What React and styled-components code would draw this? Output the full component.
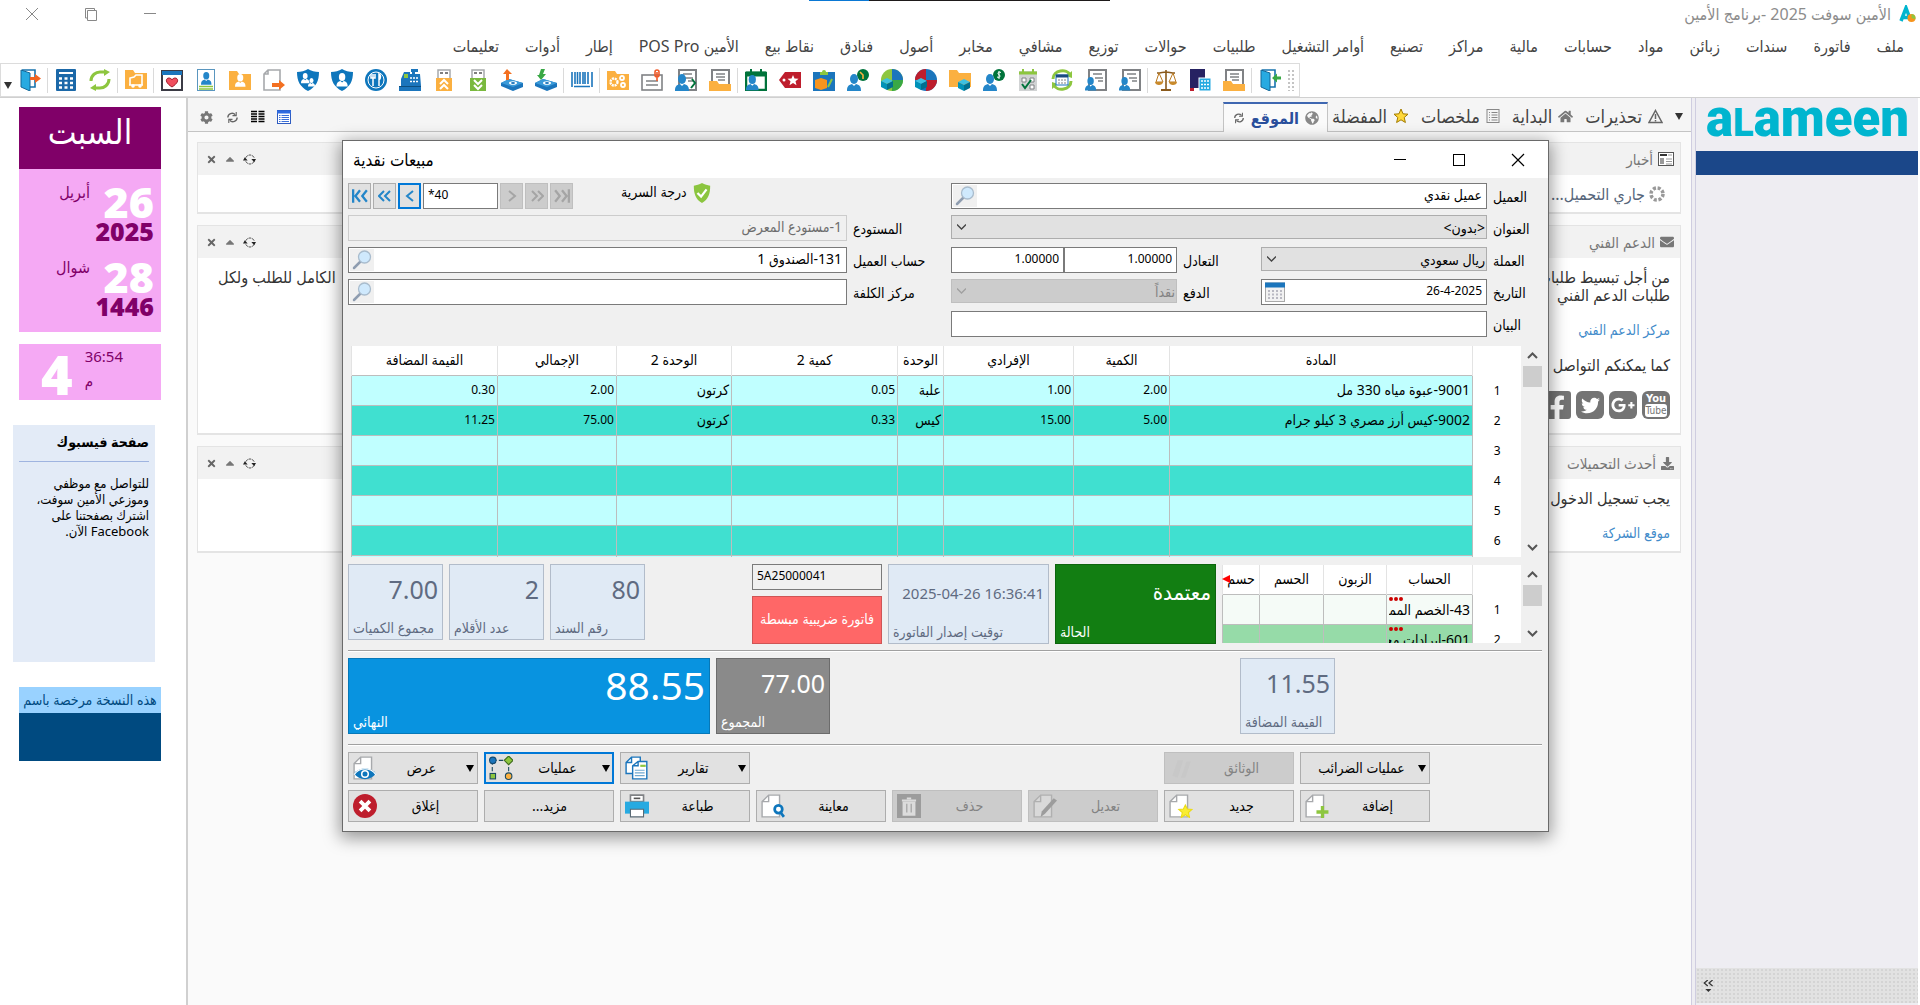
import React from 'react';
import styled, { createGlobalStyle, css } from 'styled-components';
import {
  FaCog, FaHome, FaEnvelope, FaDownload, FaGooglePlusG, FaTwitter, FaFacebookSquare, FaGlobeAmericas, FaTimes, FaCaretUp,
} from 'react-icons/fa';

const uiFont = '"Noto Sans", "DejaVu Sans Condensed", "DejaVu Sans", sans-serif';

const GlobalStyle = createGlobalStyle`
  * {
    box-sizing: border-box;
  }
  body {
    margin: 0;
    background: #fff;
    color: #000;
    font-family: ${uiFont};
    font-size: 14px;
    overflow: hidden;
  }
  button, input, select {
    font-family: inherit;
    font-size: inherit;
    color: inherit;
    margin: 0;
  }
  a {
    text-decoration: none;
  }
  svg {
    display: block;
    flex: none;
  }
`;

/* ---------- drawing pieces ---------- */

const Svg = ({ size = 22, box = 22, children }) => (
  <svg width={size} height={size} viewBox={`0 0 ${box} ${box}`} fill="none" aria-hidden="true">
    {children}
  </svg>
);

const Person = ({ x = 0, y = 0, s = 1, color = '#2486c9' }) => (
  <g transform={`translate(${x} ${y}) scale(${s})`} fill={color}>
    <ellipse cx="7" cy="5" rx="4" ry="5" />
    <path d="M0 17c0-4 1-6 5-7l2 2 2-2c4 1 5 3 5 7z" />
  </g>
);

const Folder = ({ x = 0, y = 0, w = 22, h = 19 }) => (
  <path fill="#fbb040" d={`M${x} ${y}h8l2 3h${w - 10}v${h - 3}h-${w}z`} />
);

const Sheet = () => (
  <>
    <rect x="4" y="1" width="17" height="20" fill="#fff" stroke="#808285" strokeWidth="2" />
    <path d="M8 5h9M10 9h8M13 12h5" stroke="#808285" strokeWidth="1.6" />
  </>
);

const Cube = ({ x = 0, y = 0 }) => (
  <g transform={`translate(${x} ${y})`}>
    <path d="M6 0l6 3-6 3-6-3z" fill="#3ec1e0" />
    <path d="M0 3l6 3v6l-6-3z" fill="#0092b8" />
    <path d="M12 3l-6 3v6l6-3z" fill="#00708f" />
  </g>
);

const Door = ({ arrow, back }) => (
  <>
    <path d="M3 1h13v17h-5" stroke="#1773ad" strokeWidth="1.6" />
    <path d="M2 1l9 3v18l-9-4z" fill="#27aae1" stroke="#126798" strokeWidth="1" />
    {back
      ? <path d="M22 7.500v3h-4v3l-5-4.500 5-4.500v3z" fill="#39a845" />
      : <path d="M11 8v3h5v3l6-4.500-6-4.500v3z" fill={arrow} />}
  </>
);

const Disk = () => (
  <>
    <path d="M0 14l8-4 14 4v4l-10 4-12-5z" fill="#1b75bc" />
    <path d="M0 14l8-4 14 4-10 4z" fill="#3a9ad9" />
    <ellipse cx="12" cy="14" rx="4" ry="1.800" fill="#fff" />
    <ellipse cx="12" cy="14" rx="2" ry=".9" fill="#1b75bc" />
  </>
);

const DocFolder = () => (
  <>
    <rect x="3" y="1" width="17" height="17" fill="#fff" stroke="#808285" strokeWidth="2" />
    <path d="M7 5h9M7 8h9M9 11h7" stroke="#808285" strokeWidth="1.500" />
    <path d="M0 12h8l2 3h12v7H0z" fill="#fbb040" />
  </>
);

const ShieldShape = () => <path d="M11 0c3 2 7 3 11 3 0 9-3 15-11 19C3 18 0 12 0 3c4 0 8-1 11-3z" fill="#0e76bc" />;

const UsbStick = ({ color, children }) => (
  <>
    <path d="M5 9V1h12v8" stroke="#a7a9ac" strokeWidth="1.500" fill="#fff" />
    <path d="M7 4h3M12 4h3" stroke="#555" strokeWidth="1.500" />
    <rect x="3" y="9" width="16" height="13" fill={color} />
    <g stroke="#fff" strokeWidth="2">{children}</g>
  </>
);

const BlankDoc = () => (
  <path d="M7 1h10v20H1V7z M7 1v6H1" fill="#fff" stroke="#a7a9ac" strokeWidth="1.300" />
);

const toolGroups = [
  [{ name: 'خروج', art: <Door arrow="#f26522" /> }],
  [
    {
      name: 'آلة حاسبة',
      art: (
        <>
          <rect x="1" width="20" height="22" rx="1" fill="#1b68a8" />
          <path d="M4 4h14" stroke="#fff" strokeWidth="2" />
          <path d="M4 9.500h14M4 14h14M4 18.500h14" stroke="#fff" strokeWidth="2.600" strokeDasharray="3 2.500" />
        </>
      ),
    },
    {
      name: 'تحديث',
      art: (
        <>
          <path d="M2 12c0-6 5-9 9-9h6M20 10c0 6-5 9-9 9H5" stroke="#8dc63f" strokeWidth="3" />
          <path d="M15 0l6 3-6 4zM7 15l-6 4 6 3z" fill="#8dc63f" />
        </>
      ),
    },
  ],
  [{
    name: 'توزيع',
    art: (
      <>
        <Folder y={1} />
        <path d="M5 16V9l4-1 2-2h6v10M4 16h14" stroke="#fff" strokeWidth="1.600" />
        <circle cx="8" cy="17" r="1.800" fill="#fff" />
        <circle cx="15" cy="17" r="1.800" fill="#fff" />
      </>
    ),
  }],
  [
    {
      name: 'مشافي',
      art: (
        <>
          <rect x="1" y="2" width="20" height="19" fill="#fff" stroke="#3b3b45" strokeWidth="2" />
          <path d="M1 4h20" stroke="#1b75bc" strokeWidth="4" />
          <path d="M11 18c-8-5-6-9-3-9 1 0 3 1 3 2 0-1 2-2 3-2 3 0 5 4-3 9z" fill="#f04e5e" stroke="#a01c2c" />
        </>
      ),
    },
    {
      name: 'طبيب',
      art: (
        <>
          <rect x="2.500" y=".5" width="17" height="21" fill="#fff" stroke="#5a96bf" />
          <Person x={6} y={3} s={0.75} />
          <path d="M4 17.500h14M4 20h14" stroke="#8dc63f" strokeWidth="1.500" />
        </>
      ),
    },
    { name: 'زبائن', art: <><Folder y={2} /><Person x={6} y={5} s={0.75} color="#fff" /></> },
    {
      name: 'تصدير',
      art: (
        <>
          <path d="M5 1h12v20H1V5zM5 1v4H1" fill="#fff" stroke="#a7a9ac" strokeWidth="1.600" />
          <path d="M9 14h7v-3l6 5-6 5v-3H9z" fill="#f37021" />
        </>
      ),
    },
    { name: 'مجموعات', art: <><ShieldShape /><Person x={4} y={4} s={0.6} color="#fff" /><Person x={11} y={9} s={0.5} color="#fff" /></> },
    { name: 'مستخدمون', art: <><ShieldShape /><Person x={5.5} y={4} s={0.8} color="#fff" /></> },
    {
      name: 'مطاعم',
      art: (
        <>
          <circle cx="11" cy="11" r="11" fill="#0e76bc" />
          <circle cx="11" cy="11" r="8" stroke="#fff" />
          <path d="M8 5v12M6 5v4h4V5M14 17V5c2 1 2 4 0 6" stroke="#fff" strokeWidth="1.500" />
        </>
      ),
    },
    {
      name: 'نقطة بيع',
      art: (
        <>
          <path d="M2 10L5 3h6v2h2V3h-1V0h7v3h-3v2h5l1 12v5H0v-5h2z" fill="#1b75bc" />
          <path d="M5 5h4v4H5z" fill="#8dc63f" />
          <path d="M11 9h8M11 12.500h8" stroke="#fff" strokeWidth="1.500" strokeDasharray="2 1" />
          <path d="M0 17.500h22" stroke="#0d4f80" />
        </>
      ),
    },
    { name: 'رفع', art: <UsbStick color="#fbb040"><path d="M7 15l4-4 4 4M7 20l4-4 4 4" /></UsbStick> },
    { name: 'تنزيل', art: <UsbStick color="#7ab93e"><path d="M7 11l4 4 4-4M7 16l4 4 4-4" /></UsbStick> },
    { name: 'نسخ احتياطي', art: <><Disk /><path d="M6 0l5 5H8v6H5V5H2z" fill="#f37021" /></> },
    { name: 'استرجاع', art: <><Disk /><path d="M6 0h4L8 5h3l-5 6-4-5h2z" fill="#39a845" /></> },
  ],
  [{
    name: 'باركود',
    art: <path d="M1 3v15M4 3v12M6.500 3v12M9 3v12M12 3v12M14 3v12M17 3v12M21 3v15M3 17.500h16" stroke="#1b75bc" strokeWidth="1.600" />,
  }],
  [
    {
      name: 'إعدادات',
      art: (
        <>
          <Folder y={2} />
          <circle cx="7" cy="13" r="3.500" stroke="#fff" strokeWidth="2.400" strokeDasharray="2 .8" />
          <circle cx="15" cy="9" r="2" stroke="#fff" strokeWidth="1.800" />
          <circle cx="16" cy="16" r="2" stroke="#fff" strokeWidth="1.800" />
        </>
      ),
    },
    {
      name: 'ملاحظة',
      art: (
        <>
          <rect x="1" y="6" width="20" height="15" fill="#fff" stroke="#808285" strokeWidth="1.600" />
          <path d="M5 12h12M5 16h12" stroke="#808285" strokeWidth="1.500" />
          <path d="M16 12V3M14 6V3a2 2 0 014 0v3a2 2 0 01-4 0" stroke="#f15a29" strokeWidth="1.600" />
        </>
      ),
    },
    { name: 'حركة زبون', art: <><Sheet /><Person x={0} y={5} /><path d="M17 10l3 4-4 5" stroke="#00733b" strokeWidth="2" /></> },
    { name: 'كشف', art: <DocFolder /> },
  ],
  [
    {
      name: 'مواعيد',
      art: (
        <>
          <rect x="1" y="4" width="20" height="17" fill="#fff" stroke="#00733b" strokeWidth="2.500" />
          <path d="M1 5h20" stroke="#00733b" strokeWidth="5" />
          <path d="M6 0v4M16 0v4" stroke="#00733b" strokeWidth="2" />
          <Person x={1} y={6} s={0.9} />
        </>
      ),
    },
    {
      name: 'عروض',
      art: (
        <>
          <path d="M6 3h16v16H6l-6-8z" fill="#be1e2d" />
          <path d="M14 6l1.500 3.500 4 .3-3 2.500 1 4-3.500-2.200-3.500 2.200 1-4-3-2.500 4-.3z" fill="#fff" />
          <circle cx="5" cy="11" r="1.500" fill="#fff" />
        </>
      ),
    },
    {
      name: 'جرد',
      art: (
        <>
          <rect y="3" width="22" height="19" fill="#1b75bc" />
          <path d="M7 3h2a2 2 0 014 0h2v3H7z" fill="#8dc63f" />
          <path d="M2 11l6-2 6 2v8l-6 2-6-2z" fill="#f7941d" />
          <path d="M15 18l4-8" stroke="#8dc63f" strokeWidth="2" />
        </>
      ),
    },
    { name: 'استحقاق', art: <><circle cx="16" cy="6" r="6" fill="#00733b" /><path d="M13 3l3 3v4" stroke="#fbb040" strokeWidth="1.600" /><Person x={0} y={5} /></> },
    { name: 'أرباح المواد', art: <><circle cx="11" cy="11" r="11" fill="#8dc63f" /><path d="M11 0a11 11 0 0111 11H11z" fill="#1b75bc" /><path d="M11 22a11 11 0 0011-11H11z" fill="#39a845" /><Cube y={9} /></> },
    { name: 'مبيعات المواد', art: <><circle cx="11" cy="11" r="11" fill="#1b75bc" /><path d="M11 0a11 11 0 00-11 11h11z" fill="#be1e2d" /><path d="M11 22a11 11 0 0011-11H11z" fill="#be1e2d" /><Cube y={9} /></> },
    { name: 'مواد', art: <><Folder y={1} h={17} /><Cube x={9} y={10} /></> },
    { name: 'دفعات', art: <><circle cx="16" cy="6" r="6" fill="#00733b" /><path d="M18 3.500c-3-1.500-4 1.500-2 2.200s1 3.800-2 2.300M16 2v8" stroke="#fff" /><Person x={0} y={5} /></> },
    {
      name: 'مهام',
      art: (
        <>
          <rect x="2" y="2" width="18" height="20" fill="#d1d3d4" />
          <path d="M2 4h18" stroke="#8dc63f" strokeWidth="3" />
          <path d="M6 0v4M16 0v4" stroke="#8dc63f" strokeWidth="2" />
          <path d="M5 9h4v4H5zM13 9h4v4h-4zM13 16h4v4h-4z" fill="#fff" stroke="#808285" />
          <path d="M5 15l3 4 6-8" stroke="#00733b" strokeWidth="2" />
        </>
      ),
    },
    {
      name: 'تدوير',
      art: (
        <>
          <path d="M2 10c0-9 14-11 17-4M20 12c0 9-14 11-17 4" stroke="#8dc63f" strokeWidth="3" />
          <path d="M21 2v7l-6-2zM1 20v-7l6 2z" fill="#8dc63f" />
          <rect x="5" y="6" width="12" height="10" fill="#fff" stroke="#1b75bc" />
          <path d="M5 7h12" stroke="#1b4a80" strokeWidth="3" />
          <path d="M7 11h8M7 14h8" stroke="#808285" strokeDasharray="2 1" />
        </>
      ),
    },
    { name: 'بطاقة زبون', art: <><Sheet /><Person x={0} y={8} s={0.8} /></> },
    { name: 'كشف زبون', art: <><Sheet /><Person x={0} y={8} s={0.8} /></> },
  ],
  [
    {
      name: 'ميزان',
      art: (
        <>
          <path d="M11 1v19M2 4c4 0 6-1 9-1s5 1 9 1" stroke="#8a5a1c" strokeWidth="1.600" />
          <path d="M4 4L1 13h7zM18 4l-4 9h7z" stroke="#b9781f" />
          <path d="M0 13h8c0 4-8 4-8 0zM14 13h8c0 4-8 4-8 0z" fill="#c98a2b" />
          <path d="M6 20h10v2H6z" fill="#8a5a1c" />
        </>
      ),
    },
    {
      name: 'دفتر',
      art: (
        <>
          <rect x="1" width="15" height="19" fill="#262262" />
          <path d="M1 19h4v3H1z" fill="#be1e2d" />
          <rect x="10" y="9" width="12" height="13" fill="#27aae1" stroke="#fff" />
          <path d="M12 12h8M12 15.500h8M12 19h8" stroke="#fff" strokeWidth="1.600" strokeDasharray="2 1" />
        </>
      ),
    },
    { name: 'دفتر اليومية', art: <DocFolder /> },
  ],
  [{ name: 'دخول', art: <Door back /> }],
];

/* ---------- main frame ---------- */

const Screen = styled.div`
  height: 100vh;
  display: flex;
  flex-direction: column;
`;

const TopStrip = styled.div`
  position: absolute;
  top: 0;
  left: 809px;
  width: 301px;
  height: 1px;
  background: #1e1a1a;
  border-left: 60px solid #0a78d4;
`;

const TitleBar = styled.header`
  height: 28px;
  flex: none;
  display: flex;
  justify-content: space-between;
  align-items: center;
  padding: 0 4px 0 24px;
`;

const WindowControls = styled.div`
  display: flex;
  gap: ${(p) => p.$gap}px;
  align-items: center;
`;

const PlainButton = styled.button`
  display: flex;
  align-items: center;
  justify-content: center;
  width: ${(p) => p.$w || 16}px;
  height: ${(p) => p.$h || 16}px;
  padding: 0;
  border: 0;
  background: none;
`;

const AppTitle = styled.h1`
  margin: 0;
  display: flex;
  align-items: center;
  gap: 8px;
  font-size: 16px;
  font-weight: 400;
  color: #8c8c8c;
`;

const Menu = styled.nav`
  height: 35px;
  flex: none;
  display: flex;
  align-items: center;
  gap: 26px;
  padding: 0 16px;
  font-size: 16px;
  white-space: nowrap;
`;

const MenuLink = styled.a`
  color: #444;
`;

const ToolRow = styled.div`
  height: 35px;
  flex: none;
  display: flex;
  align-items: stretch;
  border-bottom: 1px solid #d0d0d0;
`;

const Toolbar = styled.div`
  display: flex;
  align-items: center;
  border: 1px solid #dcdcdc;
`;

const MoreTools = styled.button`
  align-self: stretch;
  width: 12px;
  padding: 0 0 7px 3px;
  display: flex;
  align-items: flex-end;
  border: 0;
  background: none;
`;

const ToolDivider = styled.span`
  width: 2px;
  height: 25px;
  border-left: 1px solid #dadada;
`;

const Grip = styled.span`
  width: 9px;
  height: 22px;
  margin: 0 3px 0 0;
  background-image: radial-gradient(circle, #c4c4c4 1px, transparent 1px);
  background-size: 4px 4px;
`;

const Workspace = styled.div`
  flex: 1;
  min-height: 0;
  display: flex;
`;

/* ---------- left side ---------- */

const DateSide = styled.aside`
  width: 188px;
  flex: none;
  padding: 9px 0 0 19px;
  border-right: 2px solid #d0d0d0;
`;

const DayName = styled.div`
  width: 142px;
  height: 62px;
  background: #800068;
  color: #fff;
  font-size: 34px;
  line-height: 48px;
  text-align: center;
`;

const DateCard = styled.div`
  width: 142px;
  height: 163px;
  padding: 14px 7px 0;
  background: #f5a9f4;
  color: #800068;
`;

const DateBlock = styled.div`
  display: grid;
  grid-template-columns: 50px 1fr;
  grid-template-rows: 38px 20px;
  column-gap: 14px;
  height: 75px;
  font-size: 16px;
  line-height: 18px;
`;

const BigNumber = styled.strong`
  font-family: "Open Sans", "Noto Sans", sans-serif;
  font-size: ${(p) => p.$size}px;
  line-height: ${(p) => p.$line}px;
  font-weight: 800;
  color: #fff;
`;

const YearNumber = styled.strong`
  grid-column: 1 / 3;
  font-family: "Open Sans", "Noto Sans", sans-serif;
  font-size: 25px;
  line-height: 20px;
  font-weight: 800;
`;

const TimeCard = styled.div`
  width: 142px;
  height: 56px;
  margin-top: 12px;
  padding: 0 20px 0 22px;
  display: flex;
  gap: 12px;
  background: #f5a9f4;
  color: #800068;
  font-size: 15px;
  line-height: 24px;
`;

const PageCard = styled.section`
  width: 142px;
  height: 237px;
  margin: 25px 0 25px -6px;
  padding: 8px 6px;
  background: #e3ebf7;
  font-size: 13px;
  line-height: 16px;
`;

const PageTitle = styled.h2`
  margin: 0 0 13px;
  padding-bottom: 10px;
  border-bottom: 1px solid #9fb4e0;
  font-size: 14px;
  line-height: 18px;
`;

const LicenseLabel = styled.div`
  width: 142px;
  height: 26px;
  background: #99d2ff;
  color: #004a80;
  font-size: 14px;
  line-height: 26px;
  text-align: center;
  white-space: nowrap;
`;

const LicenseName = styled.div`
  width: 142px;
  height: 48px;
  background: #004a80;
`;

/* ---------- home page ---------- */

const Home = styled.main`
  flex: 1;
  min-width: 0;
  background: #fafafa;
`;

const TabBar = styled.div`
  height: 34px;
  display: flex;
  align-items: flex-end;
  justify-content: space-between;
  background: #f5f5f5;
  border-bottom: 1px solid #c4c4c4;
`;

const Tabs = styled.div`
  display: flex;
  align-items: center;
  gap: 12px;
  padding-right: 8px;
`;

const Tab = styled.button`
  display: flex;
  align-items: center;
  gap: 6px;
  height: 30px;
  padding: 0;
  border: 0;
  background: none;
  color: #444;
  font-size: 18px;
  white-space: nowrap;
  ${(p) => p.$active && css`
    margin: 0 -8px -1px 0;
    padding: 0 8px 0 9px;
    border: 1px solid #c4c4c4;
    border-top: 2px solid #3f67b1;
    border-bottom: 0;
    background: #fafafa;
    color: #2a4f9c;
    font-size: 16px;
    font-weight: 600;
  `}
`;

const PageTools = styled.div`
  display: flex;
  align-items: center;
  gap: 10px;
  height: 28px;
  padding-left: 10px;
`;

const Panels = styled.div`
  display: flex;
  flex-direction: column;
  gap: 11px;
  padding: 10px 10px 0 9px;
`;

const Panel = styled.section`
  height: ${(p) => p.$h}px;
  border: 1px solid #e4e4e4;
  border-bottom-width: 2px;
  background: #fff;
`;

const PanelHead = styled.div`
  display: flex;
  justify-content: space-between;
  align-items: center;
  height: 32px;
  padding: 0 6px 0 5px;
  background: #f2f2f2;
  color: #777;
`;

const PanelTitle = styled.h2`
  margin: 0;
  display: flex;
  align-items: center;
  gap: 5px;
  font-size: 15px;
  line-height: 28px;
  font-weight: 400;
`;

const PanelBody = styled.div`
  padding: ${(p) => p.$top}px 10px 0 20px;
  color: #333;
  font-size: 16px;
  line-height: 18px;
`;

const Loading = styled.p`
  margin: 0;
  padding: 0 5px;
  display: flex;
  align-items: center;
  gap: 4px;
  color: #56657a;
`;

const Line = styled.p`
  margin: 0;
  display: flex;
  justify-content: space-between;
  white-space: nowrap;
`;

const PanelLink = styled.a`
  display: block;
  margin: 17px 0;
  color: #428bca;
  font-size: 14px;
`;

const Socials = styled.div`
  display: flex;
  gap: 5px;
  margin-top: 17px;
`;

const SocialLink = styled.a`
  width: 28px;
  height: 28px;
  display: flex;
  align-items: center;
  justify-content: center;
  border-radius: 6px;
  background: ${(p) => (p.$bare ? 'none' : '#747474')};
  color: ${(p) => (p.$bare ? '#747474' : '#fff')};
`;

/* ---------- brand side ---------- */

const BrandSide = styled.aside`
  width: 229px;
  flex: none;
  display: flex;
  flex-direction: column;
  background: #eeedf2;
  border-left: 1px solid #cfcde0;
  border-right: 2px solid #fff;
`;

const BrandInner = styled.div`
  flex: 1;
  margin-left: 3px;
  border-left: 1px solid #cfcde0;
  display: flex;
  flex-direction: column;
`;

const Logo = styled.div`
  height: 53px;
  padding-left: 10px;
  color: #00b5cf;
  font-family: Roboto, sans-serif;
  font-weight: 900;
  font-size: 51px;
  line-height: 42px;
`;

const LogoCap = styled.span`
  font-size: 38px;
`;

const BlueBar = styled.div`
  height: 24px;
  background: #1b4789;
`;

const BrandFoot = styled.div`
  height: 35px;
  margin-top: auto;
  margin-bottom: 2px;
  padding: 12px 7px;
  background-color: #e2e2e2;
  background-image: radial-gradient(circle, #d4d4d4 1px, transparent 1px);
  background-size: 4px 4px;
`;

/* ---------- invoice window ---------- */

const Dialog = styled.section`
  position: absolute;
  top: 140px;
  left: 342px;
  width: 1207px;
  border: 1px solid #6a6a6a;
  background: #f0f0f0;
  box-shadow: 0 4px 16px 2px rgba(0, 0, 0, 0.4);
`;

const DialogHead = styled.header`
  height: 37px;
  display: flex;
  justify-content: space-between;
  align-items: center;
  padding: 0 22px 0 10px;
  background: #fff;
`;

const DialogTitle = styled.h2`
  margin: 0;
  font-size: 17px;
  font-weight: 400;
`;

const DialogBody = styled.div`
  padding: 5px 6px 9px 5px;
`;

const FormGrid = styled.div`
  display: grid;
  grid-template-columns: minmax(0, 499fr) 92px minmax(0, 536fr) 49px;
  grid-auto-rows: 26px;
  gap: 6px;
`;

const Label = styled.label`
  padding-top: 4px;
  line-height: 20px;
  white-space: nowrap;
`;

const NavRow = styled.div`
  display: flex;
  gap: 2px;
`;

const NavButton = styled.button`
  width: 23px;
  height: 26px;
  padding: 0;
  display: flex;
  align-items: center;
  justify-content: center;
  border: 1px solid #adadad;
  background: #e1e1e1;
  color: #2486c9;
  ${(p) => p.$focus && css`border: 2px solid #0078d7;`}
  &:disabled {
    border-color: #bfbfbf;
    background: #ccc;
    color: #a5a5a5;
  }
`;

const Secrecy = styled.span`
  display: flex;
  gap: 5px;
  margin-left: 46px;
  line-height: 18px;
`;

const FieldBox = styled.div`
  position: relative;
  min-width: 0;
`;

const TextInput = styled.input`
  width: ${(p) => (p.$w ? `${p.$w}px` : '100%')};
  height: 26px;
  padding: 0 4px 3px;
  border: 1px solid #7a7a7a;
  border-radius: 0;
  background: ${(p) => p.$fill || '#fff'};
  font-size: ${(p) => (p.$num ? 12 : 14)}px;
  outline: 0;
  &:disabled {
    border-color: #ccc;
    background: #f0f0f0;
    color: #6d6d6d;
  }
`;

const FieldIcon = styled.button`
  position: absolute;
  top: 2px;
  left: 2px;
  width: 24px;
  height: 22px;
  padding: 0;
  display: flex;
  align-items: center;
  justify-content: center;
  border: 0;
  background: ${(p) => (p.$plain ? 'none' : '#f0f0f0')};
`;

const SelectInput = styled.select`
  width: 100%;
  height: 24px;
  padding: 0 1px;
  border: 1px solid #adadad;
  border-radius: 0;
  background: #e1e1e1;
  appearance: none;
  &:disabled {
    border-color: #bfbfbf;
    background: #ccc;
    color: #838383;
    opacity: 1;
  }
`;

const Chevron = styled.span`
  position: absolute;
  top: 9px;
  left: 6px;
  color: ${(p) => (p.$off ? '#a0a0a0' : '#444')};
  pointer-events: none;
`;

const SplitField = styled.div`
  display: grid;
  grid-template-columns: minmax(0, 1fr) 72px minmax(0, 1fr);
  gap: 6px;
`;

const Pair = styled.div`
  display: grid;
  grid-template-columns: 1fr 1fr;
`;

const GridArea = styled.div`
  display: flex;
  gap: 2px;
  margin: 9px 0 7px 3px;
  height: 211px;
`;

const GridClip = styled.div`
  position: relative;
  flex: ${(p) => (p.$w ? `0 0 ${p.$w}px` : 1)};
  min-width: 0;
  overflow: hidden;
  background: #fff;
`;

const Table = styled.table`
  width: 100%;
  table-layout: fixed;
  border-collapse: collapse;
`;

const HeadCell = styled.th`
  height: 29px;
  padding: 0 2px;
  border-left: 1px solid #e3e3e3;
  background: #fff;
  font-weight: 400;
  line-height: 20px;
  overflow: hidden;
  white-space: nowrap;
`;

const Cell = styled.td`
  height: 30px;
  padding: 0 2px;
  border: 1px solid #bdbdbd;
  background: ${(p) => p.$fill};
  font-size: ${(p) => (p.$num ? 12 : 14)}px;
  line-height: 20px;
  text-align: right;
  overflow: hidden;
  white-space: nowrap;
`;

const CellAnchor = styled.div`
  position: relative;
  height: 29px;
  padding-top: 5px;
  overflow: hidden;
`;

const CellDots = styled.span`
  position: absolute;
  top: 2px;
  left: 0;
`;

const MoreColumns = styled.span`
  position: absolute;
  top: 10px;
  left: 0;
`;

const NumberCell = styled.th`
  border: 0;
  background: #fff;
  font-size: 12px;
  font-weight: 400;
  text-align: center;
`;

const ScrollBar = styled.div`
  width: 19px;
  flex: none;
  display: flex;
  flex-direction: column;
  align-items: center;
  padding-top: 6px;
`;

const ScrollThumb = styled.span`
  width: 19px;
  height: 21px;
  margin: 7px 0 auto;
  background: #cdcdcd;
`;

const SummaryRow = styled.div`
  display: flex;
  gap: 6px;
  height: 80px;
`;

const Spacer = styled.span`
  flex: 1;
`;

const tileColors = {
  pale: ['#e0eaf5', '#b2bcca', '#5f6b81'],
  green: ['#127e12', '#0d650d', '#fff'],
  blue: ['#0893e0', '#0678b8', '#fff'],
  gray: ['#8a8a8a', '#6c6c6c', '#fff'],
};

const Tile = styled.div`
  width: ${(p) => p.$w}px;
  height: ${(p) => p.$h || 76}px;
  flex: none;
  display: flex;
  flex-direction: column;
  justify-content: space-between;
  padding: ${(p) => p.$top || 6}px 4px 1px;
  border: 1px solid ${(p) => tileColors[p.$tone][1]};
  background: ${(p) => tileColors[p.$tone][0]};
  color: ${(p) => tileColors[p.$tone][2]};
`;

const TileValue = styled.output`
  text-align: right;
  font-size: ${(p) => p.$size || 25}px;
  line-height: ${(p) => p.$line || 36}px;
  white-space: nowrap;
`;

const TileLabel = styled.span`
  line-height: 20px;
  text-align: left;
  white-space: nowrap;
`;

const TaxStack = styled.div`
  width: 130px;
  flex: none;
  display: flex;
  flex-direction: column;
  gap: 6px;
`;

const TaxKind = styled.div`
  height: 48px;
  border: 1px solid #cf5555;
  background: #ff6767;
  color: #fff;
  line-height: 44px;
  text-align: center;
  white-space: nowrap;
`;

const SmallGrid = styled.div`
  display: flex;
  gap: 2px;
  height: 79px;
  padding-top: 1px;
`;

const Rule = styled.hr`
  height: 2px;
  margin: ${(p) => p.$top}px 0 6px;
  border: 0;
  border-top: 1px solid #a0a0a0;
  background: #fff;
`;

const TotalsRow = styled.div`
  display: grid;
  grid-template-columns: 362px 114px 1fr 95px 201px;
  gap: 6px;
`;

const Actions = styled.div`
  display: grid;
  grid-template-columns: repeat(8, 130px);
  gap: 6px;
`;

const ActionButton = styled.button`
  grid-column: ${(p) => p.$col};
  height: 32px;
  padding: 0 3px 0 4px;
  display: flex;
  align-items: center;
  border: 1px solid #adadad;
  background: #e1e1e1;
  white-space: nowrap;
  ${(p) => p.$focus && css`
    padding: 0 2px 0 3px;
    border: 2px solid #0078d7;
  `}
  &:disabled {
    border-color: #bfbfbf;
    background: #ccc;
    color: #838383;
  }
`;

const ActionText = styled.span`
  flex: 1;
  line-height: 20px;
  text-align: center;
`;

/* ---------- data ---------- */

const menuItems = [
  'ملف', 'فاتورة', 'سندات', 'زبائن', 'مواد', 'حسابات', 'مالية', 'مراكز', 'تصنيع', 'أوامر التشغيل', 'طلبيات',
  'حوالات', 'توزيع', 'مشافي', 'مخابر', 'أصول', 'فنادق', 'نقاط بيع', 'الأمين POS Pro', 'إطار', 'أدوات', 'تعليمات',
];

const columns = [
  { title: 'القيمة المضافة', w: 146, num: true },
  { title: 'الإجمالي', w: 119, num: true },
  { title: 'الوحدة 2', w: 115 },
  { title: 'كمية 2', w: 166, num: true },
  { title: 'الوحدة', w: 46 },
  { title: 'الإفرادي', w: 130, num: true },
  { title: 'الكمية', w: 96, num: true },
  { title: 'المادة', w: 303 },
];

const rows = [
  ['0.30', '2.00', 'كرتون', '0.05', 'علبة', '1.00', '2.00', '9001-عبوة مياه 330 مل'],
  ['11.25', '75.00', 'كرتون', '0.33', 'كيس', '15.00', '5.00', '9002-كيس أرز مصري 3 كيلو جرام'],
  [], [], [], [], [],
];

const Arrow = ({ d, size = 14 }) => (
  <Svg size={size} box={14}><path d={d} stroke="currentColor" strokeWidth="2" /></Svg>
);

const Caret = ({ color = '#000' }) => (
  <svg width="8" height="7" viewBox="0 0 8 7" aria-hidden="true"><path d="M0 0h8L4 7z" fill={color} /></svg>
);

const Lens = () => (
  <Svg size={20} box={20}>
    <path d="M2 18l7-7" stroke="#8f9db0" strokeWidth="2.500" strokeLinecap="round" />
    <circle cx="12.500" cy="7" r="6" fill="#cfe9fd" stroke="#a9bccd" strokeWidth="1.300" />
  </Svg>
);

const Refresh = ({ size = 13 }) => (
  <Svg size={size} box={14}>
    <path d="M2 7c0-4 5-6 8-3M12 7c0 4-5 6-8 3" stroke="#666" strokeWidth="1.500" />
    <path d="M11 1v4H7M3 13V9h4" stroke="#666" strokeWidth="1.200" />
  </Svg>
);

const actionIcons = {
  view: (
    <>
      <BlankDoc />
      <path d="M1 16c5-6 15-6 20 0-5 7-15 7-20 0z" fill="#0e76bc" />
      <path d="M1 17c5-7 15-7 20 0" stroke="#fff" strokeWidth="1.200" />
      <circle cx="11" cy="16.500" r="3" fill="#0e76bc" stroke="#fff" strokeWidth="1.400" />
    </>
  ),
  flow: (
    <>
      <path d="M3 4h15M3 4v14M18 4v14" stroke="#1b4a60" strokeDasharray="4 2" />
      <circle cx="3.500" cy="4" r="3" fill="#1b75bc" stroke="#134a70" />
      <path d="M18 0l4 4-4 4-4-4z" fill="#8dc63f" stroke="#3d6b1c" />
      <rect x="1" y="16" width="5" height="5" fill="#8dc63f" stroke="#1b4a60" />
      <circle cx="18" cy="18.500" r="3" fill="#fbb040" stroke="#1b4a60" />
    </>
  ),
  reports: (
    <>
      <path d="M6 1h8v15H1V6zM6 1v5H1" fill="#fff" stroke="#1b75bc" strokeWidth="1.300" />
      <path d="M12 5h8v16H7V9zM12 5v4H7" fill="#fff" stroke="#1b75bc" strokeWidth="1.300" />
      <path d="M14 9h5" stroke="#8dc63f" strokeWidth="2" />
      <path d="M9 13h9M9 15.500h9M9 18h9" stroke="#6fa8d0" />
    </>
  ),
  close: <><circle cx="11" cy="11" r="11" fill="#be1e2d" /><path d="M6.500 6.500l9 9M15.500 6.500l-9 9" stroke="#fff" strokeWidth="3.500" /></>,
  print: (
    <>
      <path d="M5 1h12v6H5z" fill="#fff" stroke="#808285" strokeWidth="1.500" />
      <path d="M8 4h6" stroke="#555" strokeWidth="1.500" />
      <path d="M0 7h22v11H0z" fill="#27aae1" />
      <path d="M5 14h12v7H5z" fill="#fff" stroke="#5a6a75" />
    </>
  ),
  preview: <><BlankDoc /><circle cx="16" cy="14" r="3.500" fill="#fff" stroke="#0e76bc" strokeWidth="2.500" /><path d="M18 17l3 4" stroke="#0e76bc" strokeWidth="2.500" /></>,
  trash: <><rect width="22" height="22" fill="#9c9c9c" /><path d="M6 8h10v11H6zM4.500 6h13M9 4h4" fill="#dcdcdc" stroke="#dcdcdc" strokeWidth="1.800" /><path d="M9 9v8M13 9v8" stroke="#9c9c9c" /></>,
  edit: <><path d="M7 1h10v20H1V7zM7 1v6H1" stroke="#b0b0b0" strokeWidth="1.300" fill="#d9d9d9" /><path d="M7 21l1-5L19 4l3 2-11 12z" fill="#9c9c9c" /></>,
  fresh: <><BlankDoc /><path d="M15 10l1.800 3.800 4.200.4-3.200 2.800 1 4.500-3.800-2.500-3.800 2.500 1-4.500L9 14.200l4.200-.4z" fill="#f9ed32" stroke="#ecdc14" /></>,
  add: <><BlankDoc /><path d="M16 11v11M10.500 16.500h11" stroke="#8dc63f" strokeWidth="3" /></>,
  docs: <path d="M3 18L8 4h5L8 20zM11 20l5-15h4l-5 15z" fill="#c8c8c8" />,
};

function Action({ col, icon, text, menu, focus, disabled }) {
  return (
    <ActionButton type="button" $col={col} $focus={focus} disabled={disabled}>
      {icon && <Svg size={24}>{actionIcons[icon]}</Svg>}
      <ActionText dir="rtl">{text}</ActionText>
      {menu && <Caret />}
    </ActionButton>
  );
}

function Lookup({ id, ...rest }) {
  return (
    <FieldBox>
      <TextInput id={id} dir="rtl" {...rest} />
      <FieldIcon type="button" aria-label="بحث"><Lens /></FieldIcon>
    </FieldBox>
  );
}

function Select({ id, value, disabled }) {
  return (
    <FieldBox>
      <SelectInput id={id} dir="rtl" disabled={disabled} defaultValue={value}>
        <option>{value}</option>
      </SelectInput>
      <Chevron $off={disabled}>
        <svg width="9" height="6" viewBox="0 0 9 6" fill="none"><path d="M0 .5l4.500 4.500L9 .5" stroke="currentColor" strokeWidth="1.300" /></svg>
      </Chevron>
    </FieldBox>
  );
}

function Scroll() {
  return (
    <ScrollBar>
      <svg width="11" height="7" viewBox="0 0 11 7" fill="none"><path d="M1 6l4.500-4.500L10 6" stroke="#555" strokeWidth="2" /></svg>
      <ScrollThumb />
      <svg width="11" height="13" viewBox="0 0 11 13" fill="none"><path d="M1 1l4.500 4.500L10 1" stroke="#555" strokeWidth="2" /></svg>
    </ScrollBar>
  );
}

function HomePanel({ title, icon, h, top, children }) {
  return (
    <Panel $h={h}>
      <PanelHead>
        <PanelTitle>{icon}{title}</PanelTitle>
        <WindowControls $gap={3} dir="ltr">
          <PlainButton type="button" aria-label="إزالة"><FaTimes size={11} color="#666" /></PlainButton>
          <PlainButton type="button" aria-label="طي"><FaCaretUp size={14} color="#777" /></PlainButton>
          <PlainButton type="button" aria-label="تحديث">
            <Svg size={13} box={14}>
              <path d="M3 5a5 5 0 019 0M12 9a5 5 0 01-9 0" stroke="#333" strokeDasharray="3 1" />
              <path d="M0 8l2-3.500L5 8zM9 6.500l3 3.500 2-3.500z" fill="#222" />
            </Svg>
          </PlainButton>
        </WindowControls>
      </PanelHead>
      <PanelBody $top={top}>{children}</PanelBody>
    </Panel>
  );
}

function InvoiceForm() {
  return (
    <FormGrid>
      <NavRow>
        <NavButton type="button" aria-label="الأول"><Arrow size={16} d="M1 1v12M7 2L3 7l4 5M13 2L9 7l4 5" /></NavButton>
        <NavButton type="button" aria-label="رجوع سريع"><Arrow d="M6 2L1 7l5 5M12 2L7 7l5 5" /></NavButton>
        <NavButton type="button" aria-label="السابق" $focus><Arrow d="M10 2L4 7l6 5" /></NavButton>
        <TextInput $num $w={75} defaultValue="*40" aria-label="رقم الفاتورة" />
        <NavButton type="button" aria-label="التالي" disabled><Arrow d="M4 2l6 5-6 5" /></NavButton>
        <NavButton type="button" aria-label="تقدم سريع" disabled><Arrow d="M2 2l5 5-5 5M8 2l5 5-5 5" /></NavButton>
        <NavButton type="button" aria-label="الأخير" disabled><Arrow size={16} d="M1 2l4 5-4 5M7 2l4 5-4 5M13 1v12" /></NavButton>
        <Secrecy>
          درجة السرية
          <Svg size={20}>
            <path d="M11 0c3 2 6 2 9 3 0 9-2 15-9 19C4 18 2 12 2 3c3-1 6-1 9-3z" fill="#8bc53f" />
            <path d="M6 11l4 4 6-8" stroke="#fff" strokeWidth="2.500" />
          </Svg>
        </Secrecy>
      </NavRow>
      <span />
      <Lookup id="customer" defaultValue="عميل نقدي" />
      <Label htmlFor="customer">العميل</Label>

      <TextInput id="store" dir="rtl" defaultValue="1-مستودع المعرض" disabled />
      <Label htmlFor="store">المستودع</Label>
      <Select id="address" value="<بدون>" />
      <Label htmlFor="address">العنوان</Label>

      <Lookup id="account" defaultValue="131-الصندوق 1" />
      <Label htmlFor="account">حساب العميل</Label>
      <SplitField>
        <Pair>
          <TextInput $num dir="rtl" defaultValue="1.00000" aria-label="التعادل المقابل" />
          <TextInput $num id="rate" dir="rtl" defaultValue="1.00000" />
        </Pair>
        <Label htmlFor="rate">التعادل</Label>
        <Select id="currency" value="ريال سعودي" />
      </SplitField>
      <Label htmlFor="currency">العملة</Label>

      <Lookup id="cost" />
      <Label htmlFor="cost">مركز الكلفة</Label>
      <SplitField>
        <Select id="pay" value="نقداً" disabled />
        <Label htmlFor="pay">الدفع</Label>
        <FieldBox>
          <TextInput $num id="date" dir="rtl" defaultValue="26-4-2025" />
          <FieldIcon type="button" aria-label="التقويم" $plain>
            <Svg size={20} box={20}>
              <rect x=".5" y="1" width="19" height="18.500" fill="#f2f2f2" stroke="#a9a9a9" />
              <path d="M0 3h20" stroke="#1b75bc" strokeWidth="5" />
              <path d="M3 9h14M3 12.500h14M3 16h14" stroke="#b9b9c2" strokeWidth="2" strokeDasharray="2 2" />
            </Svg>
          </FieldIcon>
        </FieldBox>
      </SplitField>
      <Label htmlFor="date">التاريخ</Label>

      <span />
      <span />
      <TextInput id="note" dir="rtl" />
      <Label htmlFor="note">البيان</Label>
    </FormGrid>
  );
}

function ItemsGrid() {
  return (
    <GridArea>
      <GridClip>
        <Table>
          <colgroup>
            {columns.map((c) => <col key={c.title} width={c.w} />)}
            <col width={49} />
          </colgroup>
          <thead>
            <tr>
              {columns.map((c) => <HeadCell key={c.title} dir="rtl">{c.title}</HeadCell>)}
              <HeadCell />
            </tr>
          </thead>
          <tbody>
            {rows.map((row, i) => (
              <tr key={i}>
                {columns.map((c, j) => (
                  <Cell key={c.title} dir="rtl" $num={c.num} $fill={i % 2 ? '#40e0d0' : '#c0ffff'}>{row[j]}</Cell>
                ))}
                <NumberCell scope="row">{i < 6 && i + 1}</NumberCell>
              </tr>
            ))}
          </tbody>
        </Table>
      </GridClip>
      <Scroll />
    </GridArea>
  );
}

function DiscountGrid() {
  const accounts = ['43-الخصم الممنوح', '601-ايرادات مختلفة'];
  return (
    <SmallGrid>
      <GridClip $w={299}>
        <Table>
          <colgroup>
            <col width={37} />
            <col width={64} />
            <col width={63} />
            <col width={86} />
            <col width={49} />
          </colgroup>
          <thead>
            <tr>
              <HeadCell dir="rtl">حسم</HeadCell>
              <HeadCell dir="rtl">الحسم</HeadCell>
              <HeadCell dir="rtl">الزبون</HeadCell>
              <HeadCell dir="rtl">الحساب</HeadCell>
              <HeadCell />
            </tr>
          </thead>
          <tbody>
            {accounts.map((name, i) => {
              const fill = i ? '#96dba8' : '#f5fbf7';
              return (
                <tr key={name}>
                  <Cell $fill={fill} />
                  <Cell $fill={fill} />
                  <Cell $fill={fill} />
                  <Cell $fill={fill} dir="rtl">
                    <CellAnchor>
                      {name}
                      <CellDots>
                        <svg width="14" height="4" viewBox="0 0 14 4"><path d="M2 2h0M7 2h0M12 2h0" stroke="#c00" strokeWidth="4" strokeLinecap="round" /></svg>
                      </CellDots>
                    </CellAnchor>
                  </Cell>
                  <NumberCell scope="row">{i + 1}</NumberCell>
                </tr>
              );
            })}
          </tbody>
        </Table>
        <MoreColumns>
          <svg width="8" height="8" viewBox="0 0 8 8"><path d="M8 0v8L0 4z" fill="#f00" /></svg>
        </MoreColumns>
      </GridClip>
      <Scroll />
    </SmallGrid>
  );
}

function SummaryTile({ label, value, size, line, ...rest }) {
  return (
    <Tile {...rest}>
      <TileValue $size={size} $line={line}>{value}</TileValue>
      <TileLabel dir="rtl"><bdi>{label}</bdi></TileLabel>
    </Tile>
  );
}

function InvoiceWindow() {
  return (
    <Dialog role="dialog" aria-label="مبيعات نقدية" dir="ltr">
      <DialogHead>
        <DialogTitle>مبيعات نقدية</DialogTitle>
        <WindowControls $gap={43}>
          <PlainButton type="button" aria-label="تصغير"><Svg size={14} box={14}><path d="M1 6.500h12" stroke="#000" /></Svg></PlainButton>
          <PlainButton type="button" aria-label="تكبير"><Svg size={14} box={14}><rect x="1.500" y="1.500" width="11" height="11" stroke="#000" /></Svg></PlainButton>
          <PlainButton type="button" aria-label="إغلاق"><Svg size={14} box={14}><path d="M1 1l12 12M13 1L1 13" stroke="#000" strokeWidth="1.200" /></Svg></PlainButton>
        </WindowControls>
      </DialogHead>
      <DialogBody>
        <InvoiceForm />
        <ItemsGrid />
        <SummaryRow>
          <SummaryTile $tone="pale" $w={95} value="7.00" label="مجموع الكميات" />
          <SummaryTile $tone="pale" $w={95} value="2" label="عدد الأقلام" />
          <SummaryTile $tone="pale" $w={95} value="80" label="رقم السند" />
          <Spacer />
          <TaxStack>
            <TextInput $num defaultValue="5A25000041" $fill="#f0f0f0" aria-label="رقم الفاتورة الضريبية" />
            <TaxKind dir="rtl">فاتورة ضريبية مبسطة</TaxKind>
          </TaxStack>
          <SummaryTile $tone="pale" $w={161} $h={80} $top={10} size={15} value="2025-04-26 16:36:41" label="توقيت إصدار الفاتورة" />
          <SummaryTile $tone="green" $w={161} $h={80} $top={8} size={22} value="معتمدة" label="الحالة" />
          <DiscountGrid />
        </SummaryRow>
        <Rule $top={6} />
        <TotalsRow>
          <SummaryTile $tone="blue" $w={362} $top={2} size={39} line={48} value="88.55" label="النهائي" />
          <SummaryTile $tone="gray" $w={114} value="77.00" label="المجموع" />
          <span />
          <SummaryTile $tone="pale" $w={95} value="11.55" label="القيمة المضافة" />
        </TotalsRow>
        <Rule $top={10} />
        <Actions>
          <Action col={1} icon="view" text="عرض" menu />
          <Action col={2} icon="flow" text="عمليات" menu focus />
          <Action col={3} icon="reports" text="تقارير" menu />
          <Action col={7} icon="docs" text="الوثائق" disabled />
          <Action col={8} text="عمليات الضرائب" menu />
          <Action col={1} icon="close" text="إغلاق" />
          <Action col={2} text="مزيد..." />
          <Action col={3} icon="print" text="طباعة" />
          <Action col={4} icon="preview" text="معاينة" />
          <Action col={5} icon="trash" text="حذف" disabled />
          <Action col={6} icon="edit" text="تعديل" disabled />
          <Action col={7} icon="fresh" text="جديد" />
          <Action col={8} icon="add" text="إضافة" />
        </Actions>
      </DialogBody>
    </Dialog>
  );
}

function ListIcon({ color = '#888' }) {
  return (
    <Svg size={14} box={14}>
      <rect x="1" y=".5" width="12" height="13" stroke={color} />
      <path d="M3 3.500h1M5.500 3.500h6M3 6h1M5.500 6h6M3 8.500h1M5.500 8.500h6M3 11h1M5.500 11h6" stroke={color} strokeWidth="1.200" />
    </Svg>
  );
}

export default function App() {
  return (
    <Screen>
      <GlobalStyle />
      <TopStrip />
      <TitleBar>
        <WindowControls $gap={43}>
          <PlainButton type="button" aria-label="إغلاق"><Svg size={14} box={14}><path d="M1 1l12 12M13 1L1 13" stroke="#888" /></Svg></PlainButton>
          <PlainButton type="button" aria-label="استعادة"><Svg size={14} box={14}><path d="M3.500 3.500h9v10h-9zM3 11H1.500V1.500h9V3" stroke="#888" /></Svg></PlainButton>
          <PlainButton type="button" aria-label="تصغير"><Svg size={14} box={14}><path d="M1 6.500h12" stroke="#888" /></Svg></PlainButton>
        </WindowControls>
        <AppTitle dir="rtl">
          <svg width="17" height="18" viewBox="0 0 17 18" aria-hidden="true">
            <path d="M2 16L7 3l4.500 12M4 12.500h6" stroke="#00b5cf" strokeWidth="3.500" fill="none" />
            <circle cx="12.500" cy="13" r="4" fill="#f7941d" />
            <path d="M12.500 13V9a4 4 0 013.800 5.200z" fill="#8dc63f" />
          </svg>
          الأمين سوفت 2025 -برنامج الأمين
        </AppTitle>
      </TitleBar>

      <Menu dir="rtl">
        {menuItems.map((item) => <MenuLink key={item} href="#">{item}</MenuLink>)}
      </Menu>

      <ToolRow>
        <Toolbar>
          <MoreTools type="button" aria-label="المزيد"><Caret color="#333" /></MoreTools>
          {toolGroups.map((group, i) => (
            <React.Fragment key={i}>
              {i > 0 && <ToolDivider />}
              {group.map((tool) => (
                <PlainButton key={tool.name} type="button" $w={34} $h={30} title={tool.name}><Svg>{tool.art}</Svg></PlainButton>
              ))}
            </React.Fragment>
          ))}
          <Grip />
        </Toolbar>
      </ToolRow>

      <Workspace>
        <DateSide>
          <DayName>السبت</DayName>
          <DateCard dir="rtl">
            <DateBlock>
              <BigNumber $size={43} $line={38}>26</BigNumber>
              <span>أبريل</span>
              <YearNumber>2025</YearNumber>
            </DateBlock>
            <DateBlock>
              <BigNumber $size={43} $line={38}>28</BigNumber>
              <span>شوال</span>
              <YearNumber>1446</YearNumber>
            </DateBlock>
          </DateCard>
          <TimeCard>
            <BigNumber $size={54} $line={60}>4</BigNumber>
            <div>
              36:54
              <br />
              م
            </div>
          </TimeCard>
          <PageCard dir="rtl">
            <PageTitle>صفحة فيسبوك</PageTitle>
            للتواصل مع موظفي وموزعي الأمين سوفت، اشترك بصفحتنا على Facebook الآن.
          </PageCard>
          <LicenseLabel dir="rtl">هذه النسخة مرخصة باسم</LicenseLabel>
          <LicenseName />
        </DateSide>

        <Home dir="rtl">
          <TabBar>
            <Tabs>
              <Caret color="#333" />
              <Tab type="button">
                <Svg size={15} box={15}><path d="M7.500 1.500l6.500 12H1z" stroke="#666" strokeWidth="1.500" /><path d="M7.500 5v5M7.500 11v1.500" stroke="#666" strokeWidth="1.500" /></Svg>
                تحذيرات
              </Tab>
              <Tab type="button"><FaHome size={15} color="#777" />البداية</Tab>
              <Tab type="button"><ListIcon />ملخصات</Tab>
              <Tab type="button">
                <Svg size={16} box={16}><path d="M8 1l2 4.800 5 .4-3.800 3.300 1.200 5L8 11.800l-4.400 2.700 1.200-5L1 6.200l5-.4z" fill="#ffd83a" stroke="#a27b00" /></Svg>
                المفضلة
              </Tab>
              <Tab type="button" $active><FaGlobeAmericas size={14} color="#888" />الموقع<Refresh size={12} /></Tab>
            </Tabs>
            <PageTools dir="ltr">
              <PlainButton type="button" aria-label="إعدادات"><FaCog size={13} color="#777" /></PlainButton>
              <PlainButton type="button" aria-label="تحديث"><Refresh /></PlainButton>
              <PlainButton type="button" aria-label="أعمدة">
                <Svg size={14} box={14}><path d="M0 1.500h6M0 4h6M0 6.500h6M0 9h6M0 11.500h6M7.500 1.500h6M7.500 4h6M7.500 6.500h6M7.500 9h6M7.500 11.500h6" stroke="#000" strokeWidth="1.500" /></Svg>
              </PlainButton>
              <PlainButton type="button" aria-label="جدول">
                <Svg size={14} box={14}><rect x=".5" y=".5" width="13" height="13" fill="#fff" stroke="#2f5cc0" /><path d="M0 2h14" stroke="#2f6ae0" strokeWidth="3" /><path d="M2 5.500h10M2 7.500h10M2 9.500h10M2 11.500h10" stroke="#3b6fd8" strokeDasharray="1.500 1 8 0" /></Svg>
              </PlainButton>
            </PageTools>
          </TabBar>

          <Panels>
            <HomePanel
              title="أخبار"
              h={72}
              top={10}
              icon={(
                <Svg size={16} box={16}>
                  <rect x=".5" y="1.500" width="15" height="13" fill="#fff" stroke="#555" />
                  <path d="M2 4h7" stroke="#333" strokeWidth="2" />
                  <path d="M10 4h4M8 8h6M8 10.500h6M8 13h6" stroke="#999" />
                  <path d="M2 7h4v6H2z" fill="#999" />
                </Svg>
              )}
            >
              <Loading>
                <Svg size={16} box={16}><circle cx="8" cy="8" r="6" stroke="#999" strokeWidth="3.500" strokeDasharray="3 1.700" /></Svg>
                جاري التحميل...
              </Loading>
            </HomePanel>
            <HomePanel title="الدعم الفني" h={210} top={10} icon={<FaEnvelope size={14} />}>
              <Line><span>من أجل تبسيط طلبات</span><span>الكامل للطلب ولكل</span></Line>
              <Line><span>طلبات الدعم الفني</span></Line>
              <PanelLink href="#">مركز الدعم الفني</PanelLink>
              <Line><span>كما يمكنكم التواصل</span></Line>
              <Socials>
                <SocialLink href="#" aria-label="YouTube">
                  <svg width="24" height="26" viewBox="0 0 24 26">
                    <rect x="1" y="12" width="22" height="13" rx="3" fill="#fff" />
                    <text x="12" y="10" fontSize="11" fontWeight="700" textAnchor="middle" fill="#fff" fontFamily="DejaVu Sans Condensed">You</text>
                    <text x="12" y="22" fontSize="10" textAnchor="middle" fill="#747474" fontFamily="DejaVu Sans Condensed">Tube</text>
                  </svg>
                </SocialLink>
                <SocialLink href="#" aria-label="Google Plus"><FaGooglePlusG size={24} /></SocialLink>
                <SocialLink href="#" aria-label="Twitter"><FaTwitter size={19} /></SocialLink>
                <SocialLink href="#" aria-label="Facebook" $bare><FaFacebookSquare size={32} /></SocialLink>
              </Socials>
            </HomePanel>
            <HomePanel title="أحدث التحميلات" h={107} top={10} icon={<FaDownload size={13} />}>
              <Line><span>يجب تسجيل الدخول</span></Line>
              <PanelLink href="#">موقع الشركة</PanelLink>
            </HomePanel>
          </Panels>
        </Home>

        <BrandSide>
          <BrandInner>
            <Logo>a<LogoCap>L</LogoCap>ameen</Logo>
            <BlueBar />
            <BrandFoot>
              <Svg size={12} box={10}><path d="M4 0L1 2.500 4 5M8 0L5 2.500 8 5" stroke="#333" /><path d="M2 7.500h5l-2.500 2.500z" fill="#333" /></Svg>
            </BrandFoot>
          </BrandInner>
        </BrandSide>
      </Workspace>

      <InvoiceWindow />
    </Screen>
  );
}
